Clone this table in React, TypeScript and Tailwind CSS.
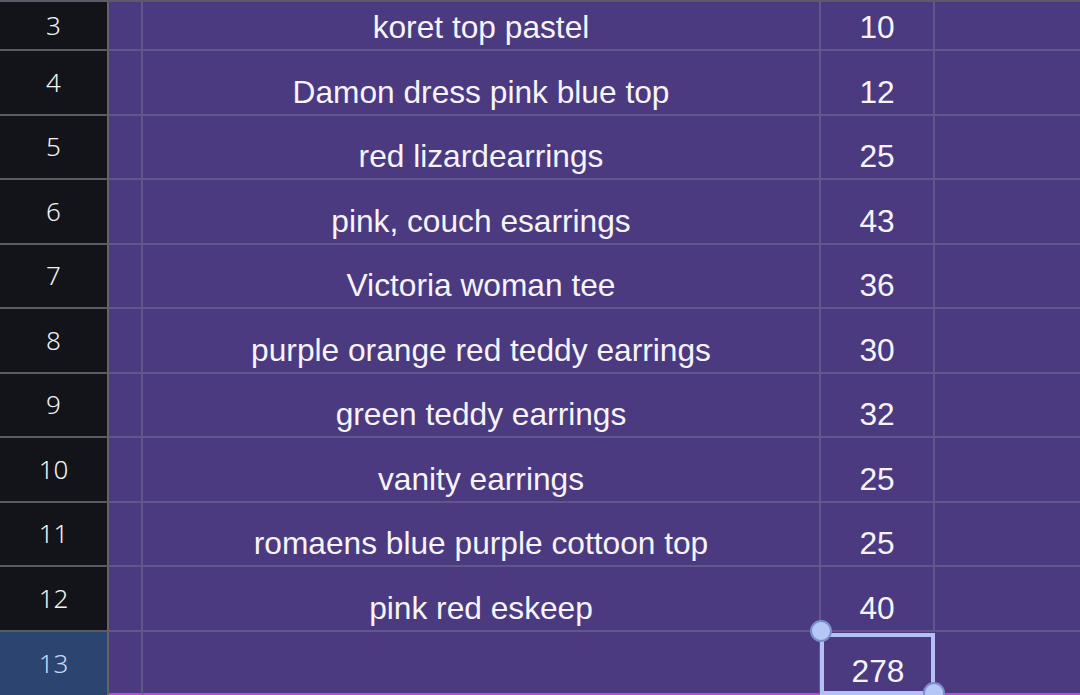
const rows: { n: number; item: string; qty: string }[] = [
  { n: 4, item: 'Damon dress pink blue top', qty: '12' },
  { n: 5, item: 'red lizardearrings', qty: '25' },
  { n: 6, item: 'pink, couch esarrings', qty: '43' },
  { n: 7, item: 'Victoria woman tee', qty: '36' },
  { n: 8, item: 'purple orange red teddy earrings', qty: '30' },
  { n: 9, item: 'green teddy earrings', qty: '32' },
  { n: 10, item: 'vanity earrings', qty: '25' },
  { n: 11, item: 'romaens blue purple cottoon top', qty: '25' },
  { n: 12, item: 'pink red eskeep', qty: '40' },
];

const cellText =
  "flex items-end justify-center pb-[5px] text-[31.7px] leading-none text-[#f6f4fa] font-['Liberation_Sans',Arial,sans-serif]";

/** One ordinary sheet row: header + four cells */
const SheetRow = ({ n, item, qty, height }: { n: number; item: string; qty: string; height: string }) => (
  <div className={`flex ${height} shrink-0`}>
    <div className="w-[109px] shrink-0 flex items-center justify-center bg-[#131419] border-r-2 border-b-2 border-r-[#62636b] border-b-[#5a5b62] text-[26px] font-light text-[#f2f2f4] font-['Noto_Sans',sans-serif]">
      {n}
    </div>
    <div className="w-[34px] shrink-0 border-r-2 border-b-2 border-[#62578b]" />
    <div className={`w-[678px] shrink-0 border-r-2 border-b-2 border-[#62578b] ${cellText}`}>{item}</div>
    <div className={`w-[114px] shrink-0 border-r-2 border-b-2 border-[#62578b] ${cellText}`}>{qty}</div>
    <div className="flex-1 border-b-2 border-[#62578b]" />
  </div>
);

export default function App() {
  return (
    <div className="w-[1080px] h-[695px] overflow-hidden flex flex-col bg-[#4b3a7f] border-t-2 border-[#5d5b6a]">
      <SheetRow n={3} item="koret top pastel" qty="10" height="h-[49px]" />
      {rows.map((r) => (
        <SheetRow key={r.n} n={r.n} item={r.item} qty={r.qty} height="h-[64.5px]" />
      ))}

      {/* Selected row 13 with the total */}
      <div className="flex flex-1">
        <div className="w-[109px] shrink-0 flex items-center justify-center bg-[#2c4570] border-r-2 border-r-[#62636b] text-[26px] font-light text-[#c7d8f6] font-['Noto_Sans',sans-serif]">
          13
        </div>
        <div className="w-[34px] shrink-0 border-r-2 border-r-[#62578b] border-b-2 border-b-[#c24ad2]" />
        <div className="w-[678px] shrink-0 border-r-2 border-r-[#62578b] border-b-2 border-b-[#c24ad2]" />
        <div className={`relative w-[114px] shrink-0 border-b-2 border-b-[#c24ad2] ${cellText}`}>
          <span className="relative z-10">278</span>
          <div className="absolute -left-[1px] top-[1px] right-0 -bottom-[2px] border-4 border-[#b2c0f4]" />
          <div className="absolute -left-[11px] -top-[12px] z-20 w-[22px] h-[22px] rounded-full bg-[#b4c7f6] border-2 border-[#7d8dcb]" />
          <div className="absolute left-[102px] top-[50px] z-20 w-[22px] h-[22px] rounded-full bg-[#b4c7f6] border-2 border-[#7d8dcb]" />
        </div>
        <div className="flex-1 border-b-2 border-b-[#c24ad2]" />
      </div>
    </div>
  );
}
